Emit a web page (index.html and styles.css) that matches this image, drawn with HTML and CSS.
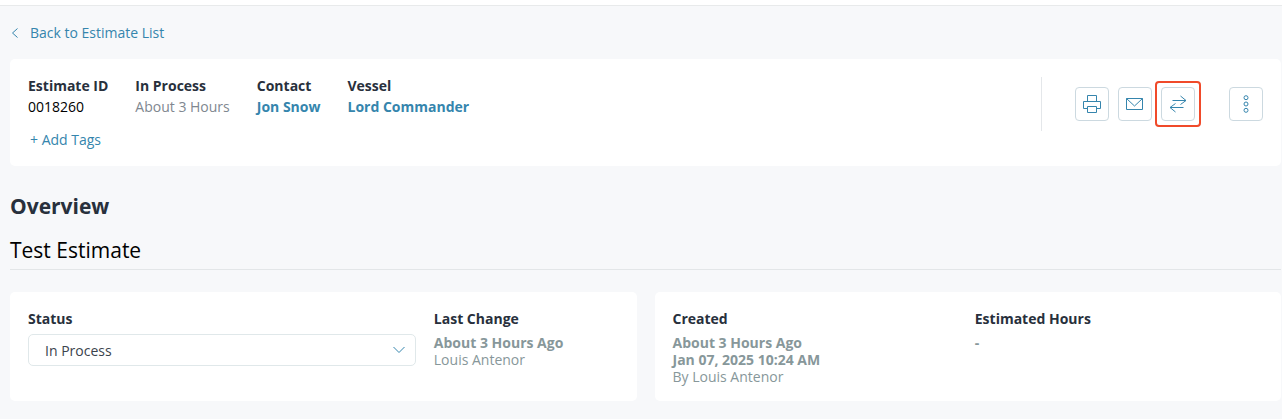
FILE: index.html
```html
<!DOCTYPE html>
<html lang="en">
<head>
    <meta charset="UTF-8">
    <meta name="viewport" content="width=device-width, initial-scale=1.0">
    <title>Estimate 0018260</title>
    <link rel="stylesheet" href="styles.css">
</head>
<body>
    <div class="top-bar"></div>

    <main class="page">
        <a href="#" class="back-link">
            <svg class="back-icon" viewBox="0 0 8 12" aria-hidden="true"><path d="M6.5 1.5L1.5 6l5 4.5"/></svg>
            Back to Estimate List
        </a>

        <!-- Estimate summary -->
        <section class="card summary">
            <div class="summary-main">
                <div class="summary-fields">
                    <div>
                        <div class="label">Estimate ID</div>
                        <div class="estimate-id">0018260</div>
                    </div>
                    <div>
                        <div class="label">In Process</div>
                        <div class="muted">About 3 Hours</div>
                    </div>
                    <div>
                        <div class="label">Contact</div>
                        <a href="#" class="strong-link">Jon Snow</a>
                    </div>
                    <div>
                        <div class="label">Vessel</div>
                        <a href="#" class="strong-link">Lord Commander</a>
                    </div>
                </div>
                <button type="button" class="add-tags">+ Add Tags</button>
            </div>

            <div class="actions">
                <button type="button" class="icon-button" aria-label="Print">
                    <svg viewBox="0 0 18 18" aria-hidden="true">
                        <path d="M4.5 6.5v-6h9v6M4.5 13.5h-4v-7h17v7h-4M4.5 11.5h9v6h-9z"/>
                    </svg>
                </button>
                <button type="button" class="icon-button" aria-label="Email">
                    <svg viewBox="0 0 18 18" aria-hidden="true">
                        <path d="M.5 3.5h16v11H.5zM.5 3.5l8 7.5 8-7.5"/>
                    </svg>
                </button>
                <button type="button" class="icon-button highlighted" aria-label="Convert">
                    <svg viewBox="0 0 18 18" aria-hidden="true">
                        <path d="M3.5 5.5H17M11.5 1l5.5 4.5-5.5 4M14.5 12.5H1M6.5 8.5l-5.5 4L6.5 17"/>
                    </svg>
                </button>
                <button type="button" class="icon-button more" aria-label="More actions">
                    <svg viewBox="0 0 18 18" aria-hidden="true">
                        <circle cx="9" cy="2.7" r="2"/>
                        <circle cx="9" cy="9" r="2"/>
                        <circle cx="9" cy="15.3" r="2"/>
                    </svg>
                </button>
            </div>
        </section>

        <h1>Overview</h1>
        <h2>Test Estimate</h2>

        <!-- Status and dates -->
        <div class="details">
            <section class="card status-card">
                <div>
                    <label class="label" for="status">Status</label>
                    <div class="select-wrap">
                        <select id="status" name="status">
                            <option>In Process</option>
                        </select>
                        <svg class="select-arrow" viewBox="0 0 12 8" aria-hidden="true"><path d="M.5 1L6 6.5 11.5 1"/></svg>
                    </div>
                </div>
                <div>
                    <div class="label">Last Change</div>
                    <p class="value"><strong>About 3 Hours Ago</strong></p>
                    <p class="value">Louis Antenor</p>
                </div>
            </section>

            <section class="card created-card">
                <div>
                    <div class="label">Created</div>
                    <p class="value"><strong>About 3 Hours Ago</strong></p>
                    <p class="value"><strong>Jan 07, 2025 10:24 AM</strong></p>
                    <p class="value">By Louis Antenor</p>
                </div>
                <div>
                    <div class="label">Estimated Hours</div>
                    <p class="value"><strong>-</strong></p>
                </div>
            </section>
        </div>
    </main>
</body>
</html>
```
FILE: styles.css
```css
* {
    margin: 0;
    padding: 0;
    box-sizing: border-box;
}

body {
    background-color: #f7f8fa;
    color: #28303c;
    font-family: "Open Sans", "Noto Sans", sans-serif;
    font-size: 14px;
    line-height: 21px;
}

a {
    color: #3585ad;
    text-decoration: none;
}

button,
select {
    font: inherit;
}

svg {
    fill: none;
    stroke: #3585ad;
}

.top-bar {
    height: 6px;
    background-color: #fff;
    border-bottom: 1px solid #e8eaeb;
}

.page {
    padding: 16px 1px 18px 10px;
}

.back-link {
    display: inline-flex;
    align-items: center;
    gap: 11px;
    margin-bottom: 16px;
    padding-left: 1px;
}

.back-icon {
    width: 8px;
    height: 12px;
}

.card {
    background-color: #fff;
    border-radius: 5px;
    padding: 16px 18px;
}

.label {
    display: block;
    font-weight: bold;
}

/* Estimate summary */
.summary {
    display: flex;
    justify-content: space-between;
    align-items: flex-start;
}

.summary-fields {
    display: flex;
    gap: 27px;
}

.estimate-id {
    color: #000;
}

.muted {
    color: #808790;
}

.strong-link {
    font-weight: bold;
}

.add-tags {
    margin-top: 12px;
    padding-left: 2px;
    border: none;
    background: none;
    color: #3585ad;
    cursor: pointer;
}

.actions {
    display: flex;
    align-items: center;
    gap: 9px;
    height: 54px;
    margin-top: 2px;
    padding-left: 33px;
    border-left: 1px solid #e4e7ea;
}

.icon-button {
    display: flex;
    align-items: center;
    justify-content: center;
    width: 34px;
    height: 34px;
    border: 1px solid #ccd9e0;
    border-radius: 4px;
    background-color: #fff;
    cursor: pointer;
}

.icon-button svg {
    width: 18px;
    height: 18px;
}

.highlighted {
    position: relative;
}

/* Red frame around the highlighted action */
.highlighted::after {
    content: "";
    position: absolute;
    inset: -7px;
    border: 2px solid #f04a2a;
    border-radius: 4px;
}

.more {
    margin-left: 25px;
}

/* Headings */
h1 {
    margin-top: 26px;
    font-size: 21px;
    line-height: 28px;
}

h2 {
    margin: 16px 0 22px;
    padding-bottom: 5px;
    border-bottom: 1px solid #e3e6e8;
    color: #000;
    font-size: 21px;
    font-weight: normal;
    line-height: 28px;
}

/* Status and dates */
.details {
    display: grid;
    grid-template-columns: 1fr 1fr;
    gap: 18px;
}

.status-card,
.created-card {
    display: grid;
}

.status-card {
    grid-template-columns: 21fr 10fr;
    gap: 18px;
}

.created-card {
    grid-template-columns: 1fr 1fr;
    gap: 14px;
}

.details .label {
    margin-bottom: 5px;
}

.value {
    color: #87979a;
    line-height: 17px;
}

.select-wrap {
    position: relative;
}

.select-wrap select {
    display: block;
    width: 100%;
    height: 32px;
    padding: 0 32px 0 16px;
    border: 1px solid #e0e8ea;
    border-radius: 5px;
    appearance: none;
    background-color: #fff;
    color: #3b434d;
}

.select-arrow {
    position: absolute;
    top: 12px;
    right: 11px;
    width: 12px;
    height: 8px;
    pointer-events: none;
}

@media (max-width: 768px) {
    .details {
        grid-template-columns: 1fr;
    }

    .summary,
    .summary-fields {
        flex-wrap: wrap;
    }
}
```
